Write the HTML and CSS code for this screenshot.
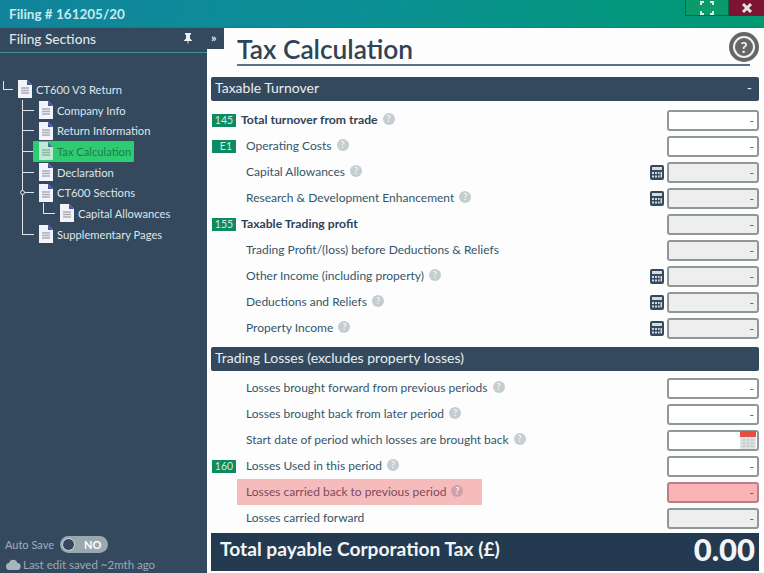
FILE: index.html
```html
<!DOCTYPE html>
<html>
<head>
<meta charset="utf-8">
<title>Tax Calculation</title>
<link rel="stylesheet" href="styles.css">
</head>
<body>
<svg class="defs" width="0" height="0">
  <symbol id="doc" viewBox="0 0 14 18">
    <path d="M0 0H9L14 5V18H0Z" fill="#f3f3fb"/>
    <path d="M9 0L14 5H9Z" fill="#4a55a8"/>
    <path d="M3 8H11M3 10.5H11M3 13H11" stroke="#a9adb5" stroke-width="1.4"/>
  </symbol>
  <symbol id="calc" viewBox="0 0 14 15">
    <rect width="14" height="15" rx="2" fill="#34495e"/>
    <rect x="2" y="2" width="10" height="3" fill="#d5dade"/>
    <path d="M2 7h2v2H2zM5 7h2v2H5zM2 10.5h2v2H2zM5 10.5h2v2H5zM8 7h1.6v2H8zM8 10.5h1.6v2H8zM10.5 7H12v5.5h-1.5z" fill="#d5dade"/>
  </symbol>
</svg>

<div class="topbar">
  <div class="filing">Filing # 161205/20</div>
  <div class="winbtns">
    <div class="winbtn expand">
      <svg width="14" height="14" viewBox="0 0 14 14"><path d="M1 4V1H4M10 1H13V4M13 10V13H10M4 13H1V10" fill="none" stroke="#d8efe6" stroke-width="2"/></svg>
    </div>
    <div class="winbtn close">
      <svg width="12" height="12" viewBox="0 0 12 12"><path d="M2 2L10 10M10 2L2 10" stroke="#e8e4e4" stroke-width="3"/></svg>
    </div>
  </div>
</div>

<div class="layout">
  <div class="sidebar">
    <div class="side-head">
      <span>Filing Sections</span>
      <svg class="pin" width="10" height="12" viewBox="0 0 10 12"><path d="M2 0H8V1.5L7 2V5.5L9.5 8H5.6L5 12L4.4 8H.5L3 5.5V2L2 1.5Z" fill="#eef1f3"/></svg>
    </div>
    <div class="collapse-tab">&raquo;</div>
    <ul class="tree">
      <li>
        <div class="item"><svg class="doc"><use href="#doc"/></svg>CT600 V3 Return</div>
        <ul>
          <li><div class="item"><svg class="doc"><use href="#doc"/></svg>Company Info</div></li>
          <li><div class="item"><svg class="doc"><use href="#doc"/></svg>Return Information</div></li>
          <li><div class="item active"><svg class="doc"><use href="#doc"/></svg>Tax Calculation</div></li>
          <li><div class="item"><svg class="doc"><use href="#doc"/></svg>Declaration</div></li>
          <li>
            <div class="item parent"><svg class="doc"><use href="#doc"/></svg>CT600 Sections</div>
            <ul>
              <li><div class="item"><svg class="doc"><use href="#doc"/></svg>Capital Allowances</div></li>
            </ul>
          </li>
          <li><div class="item"><svg class="doc"><use href="#doc"/></svg>Supplementary Pages</div></li>
        </ul>
      </li>
    </ul>
    <div class="side-foot">
      <div class="autosave">
        <span>Auto Save</span>
        <div class="toggle"><i class="knob"></i><b>NO</b></div>
      </div>
      <div class="lastedit">
        <svg width="15" height="11" viewBox="0 0 15 10" preserveAspectRatio="none"><path d="M3.5 10A3.2 3.2 0 0 1 3 3.6 4.5 4.5 0 0 1 11.4 3.6 3.2 3.2 0 0 1 11.5 10Z" fill="#aab4bb"/></svg>
        <span>Last edit saved ~2mth ago</span>
      </div>
    </div>
  </div>

  <div class="main">
    <div class="title-row">
      <h1>Tax Calculation</h1>
      <div class="help-big"><span>?</span></div>
    </div>

    <div class="bar"><span>Taxable Turnover</span><span>-</span></div>
    <div class="rows">
      <div class="row"><span class="badge">145</span><span class="label strong">Total turnover from trade<i class="q">?</i></span><div class="field">-</div></div>
      <div class="row"><span class="badge e1">E1</span><span class="label">Operating Costs<i class="q">?</i></span><div class="field">-</div></div>
      <div class="row"><span class="nobadge"></span><span class="label">Capital Allowances<i class="q">?</i></span><svg class="calc"><use href="#calc"/></svg><div class="field off">-</div></div>
      <div class="row"><span class="nobadge"></span><span class="label">Research &amp; Development Enhancement<i class="q">?</i></span><svg class="calc"><use href="#calc"/></svg><div class="field off">-</div></div>
      <div class="row"><span class="badge">155</span><span class="label strong">Taxable Trading profit</span><div class="field off">-</div></div>
      <div class="row"><span class="nobadge"></span><span class="label">Trading Profit/(loss) before Deductions &amp; Reliefs</span><div class="field off">-</div></div>
      <div class="row"><span class="nobadge"></span><span class="label">Other Income (including property)<i class="q">?</i></span><svg class="calc"><use href="#calc"/></svg><div class="field off">-</div></div>
      <div class="row"><span class="nobadge"></span><span class="label">Deductions and Reliefs<i class="q">?</i></span><svg class="calc"><use href="#calc"/></svg><div class="field off">-</div></div>
      <div class="row"><span class="nobadge"></span><span class="label">Property Income<i class="q">?</i></span><svg class="calc"><use href="#calc"/></svg><div class="field off">-</div></div>
    </div>

    <div class="bar"><span>Trading Losses (excludes property losses)</span></div>
    <div class="rows tight">
      <div class="row"><span class="nobadge"></span><span class="label">Losses brought forward from previous periods<i class="q">?</i></span><div class="field">-</div></div>
      <div class="row"><span class="nobadge"></span><span class="label">Losses brought back from later period<i class="q">?</i></span><div class="field">-</div></div>
      <div class="row"><span class="nobadge"></span><span class="label">Start date of period which losses are brought back<i class="q">?</i></span>
        <div class="field date">
          <svg width="16" height="18" viewBox="0 0 16 18"><rect width="16" height="18" fill="#e4e6e6"/><rect width="16" height="6" fill="#e2503f"/><path d="M1 9H15M1 12H15M1 15H15M4 7V17M8 7V17M12 7V17" stroke="#c6cbcb" stroke-width="1"/></svg>
        </div>
      </div>
      <div class="row"><span class="badge">160</span><span class="label">Losses Used in this period<i class="q">?</i></span><div class="field">-</div></div>
      <div class="row"><span class="nobadge"></span><span class="label error">Losses carried back to previous period<i class="q">?</i></span><div class="field bad">-</div></div>
      <div class="row"><span class="nobadge"></span><span class="label">Losses carried forward</span><div class="field off">-</div></div>
    </div>

    <div class="total"><span>Total payable Corporation Tax (£)</span><b>0.00</b></div>
  </div>
</div>
</body>
</html>
```

FILE: styles.css
```css
html,body{margin:0;padding:0;}
body{width:764px;height:573px;overflow:hidden;background:#fff;font-family:Lato,'Open Sans',sans-serif;font-size:12px;color:#34566b;}
.defs{position:absolute;}
ul{list-style:none;margin:0;padding:0;}

.topbar{height:27px;display:flex;justify-content:space-between;background:linear-gradient(100deg,#12849c 0%,#0b8f96 45%,#009a72 100%);border-bottom:1px solid #0a8a6e;}
.filing{padding:6px 0 0 9px;font-size:13.5px;font-weight:700;color:#c6eaf1;}
.winbtns{display:flex;height:16px;}
.winbtn{display:flex;align-items:center;justify-content:center;box-sizing:border-box;}
.expand{width:44px;background:#0a9a6c;border:1px solid #08684e;border-top:0;}
.close{width:35px;background:#7d1431;}

.layout{display:flex;height:545px;}
.sidebar{width:207px;flex:none;display:flex;flex-direction:column;position:relative;background:#34495e;color:#e6ebee;}
.side-head{height:21px;display:flex;align-items:center;justify-content:space-between;padding:0 14px 3px 9px;border-bottom:1px solid #3f8f98;font-size:13.7px;font-weight:500;color:#dfe5e8;}
.collapse-tab{position:absolute;left:200px;top:0;width:24px;height:21px;box-sizing:border-box;padding:2px 0 0 11px;background:#34495e;color:#e6ebee;font-size:12px;font-weight:700;}

.tree{padding:26px 0 0 18px;}
.tree ul{padding-left:21px;}
.tree li{position:relative;}
.tree li::before{content:'';position:absolute;left:-17px;top:0;width:11px;height:10px;border-left:1px solid #dfe5e8;border-bottom:1px solid #dfe5e8;}
.tree li:not(:last-child)::after{content:'';position:absolute;left:-17px;top:0;bottom:0;border-left:1px solid #dfe5e8;}
.tree>li::before{left:-15px;top:2px;height:8px;width:9px;}
.item{display:inline-flex;align-items:center;height:20.7px;font-size:11.2px;color:#dfe5e8;vertical-align:top;white-space:nowrap;position:relative;}
.parent::before{content:'';position:absolute;left:-19px;top:8px;width:3px;height:3px;border:1px solid #dfe5e8;border-radius:50%;background:#34495e;z-index:1;}
.doc{width:14px;height:18px;margin-right:4px;flex:none;}
.active{margin-left:-6px;padding:0 3px 0 6px;background:#2ecc71;color:#1f7a52;border-radius:1px;}
.active .doc{opacity:.75;}

.side-foot{margin-top:auto;padding:0 0 1px 5px;color:#9fb0ba;font-size:11px;}
.autosave{display:flex;align-items:center;gap:6px;height:19px;}
.toggle{width:48px;height:17px;box-sizing:border-box;display:flex;align-items:center;border-radius:9px;background:#9aa9ad;padding-left:2px;}
.knob{width:11px;height:11px;border-radius:50%;background:#34495e;border:1px solid #d6dcdf;}
.toggle b{margin-left:9px;color:#fff;font-size:11px;}
.lastedit{display:flex;align-items:center;gap:2px;margin-top:3px;height:15px;padding-left:1px;font-size:11.5px;color:#9aa9b3;white-space:nowrap;}

.main{flex:1;padding:0 5px 0 3px;min-width:0;background:#fdfdfd;border-left:1px solid #fff;}
.title-row{height:36px;margin:0 9px 11px 26px;border-bottom:2px solid #5f7282;position:relative;}
h1{margin:0;padding-top:5px;font-size:26.3px;line-height:32px;font-weight:600;color:#2f4356;}
.help-big{position:absolute;right:-9px;top:4px;width:30px;height:30px;border-radius:50%;background:#666;display:flex;align-items:center;justify-content:center;}
.help-big span{width:18px;height:18px;border:2px solid #f2f2f2;border-radius:50%;text-align:center;font-size:15px;line-height:18px;font-weight:700;color:#f2f2f2;}

.bar{height:24px;box-sizing:border-box;display:flex;align-items:center;justify-content:space-between;padding:0 7px 3px 4px;border-radius:2px;background:#34495e;color:#e9eef1;font-size:14px;}
.rows{margin:6px 0;}
.rows.tight{margin:4px 0 2px;}
.row{height:26px;display:flex;align-items:center;}
.badge{width:24px;height:13px;margin:0 5px 0 1px;flex:none;display:flex;align-items:center;justify-content:center;background:#0d8a5f;color:#cfeee2;font-size:10.5px;}
.badge.e1{justify-content:flex-end;padding-right:4px;box-sizing:border-box;}
.nobadge{width:30px;flex:none;}
.label{margin-left:5px;height:26px;box-sizing:border-box;padding-bottom:2px;display:flex;align-items:center;white-space:nowrap;}
.strong{margin-left:0;font-weight:700;font-size:12.2px;color:#2f4356;}
.error{margin-left:-4px;padding:0 19px 2px 9px;background:#f6bcbc;color:#7d4a5c;}
.q{width:12px;height:12px;margin-left:5px;border-radius:50%;background:#c5cdd0;color:#f4f6f6;font-size:9px;font-style:normal;font-weight:700;line-height:12px;text-align:center;}
.error .q{background:#d1a1a8;}
.calc{width:14px;height:15px;margin-left:auto;margin-right:3px;flex:none;}
.field{width:92px;height:21px;box-sizing:border-box;flex:none;margin-left:auto;padding-right:3px;border:2px solid #8f9799;border-radius:3px;background:#fff;font-size:12px;line-height:17px;text-align:right;color:#555;position:relative;}
.calc+.field{margin-left:0;}
.off{background:#eeeeef;}
.bad{background:#fbb3b6;border-color:#b98087;}
.date{padding:0;}
.date svg{position:absolute;right:1px;top:-1px;}

.total{height:38px;box-sizing:border-box;display:flex;align-items:center;justify-content:space-between;padding:0 4px 7px 9px;background:#233a50;color:#f2f4f5;font-size:19.2px;font-weight:700;}
.total b{font-size:31px;}
```
